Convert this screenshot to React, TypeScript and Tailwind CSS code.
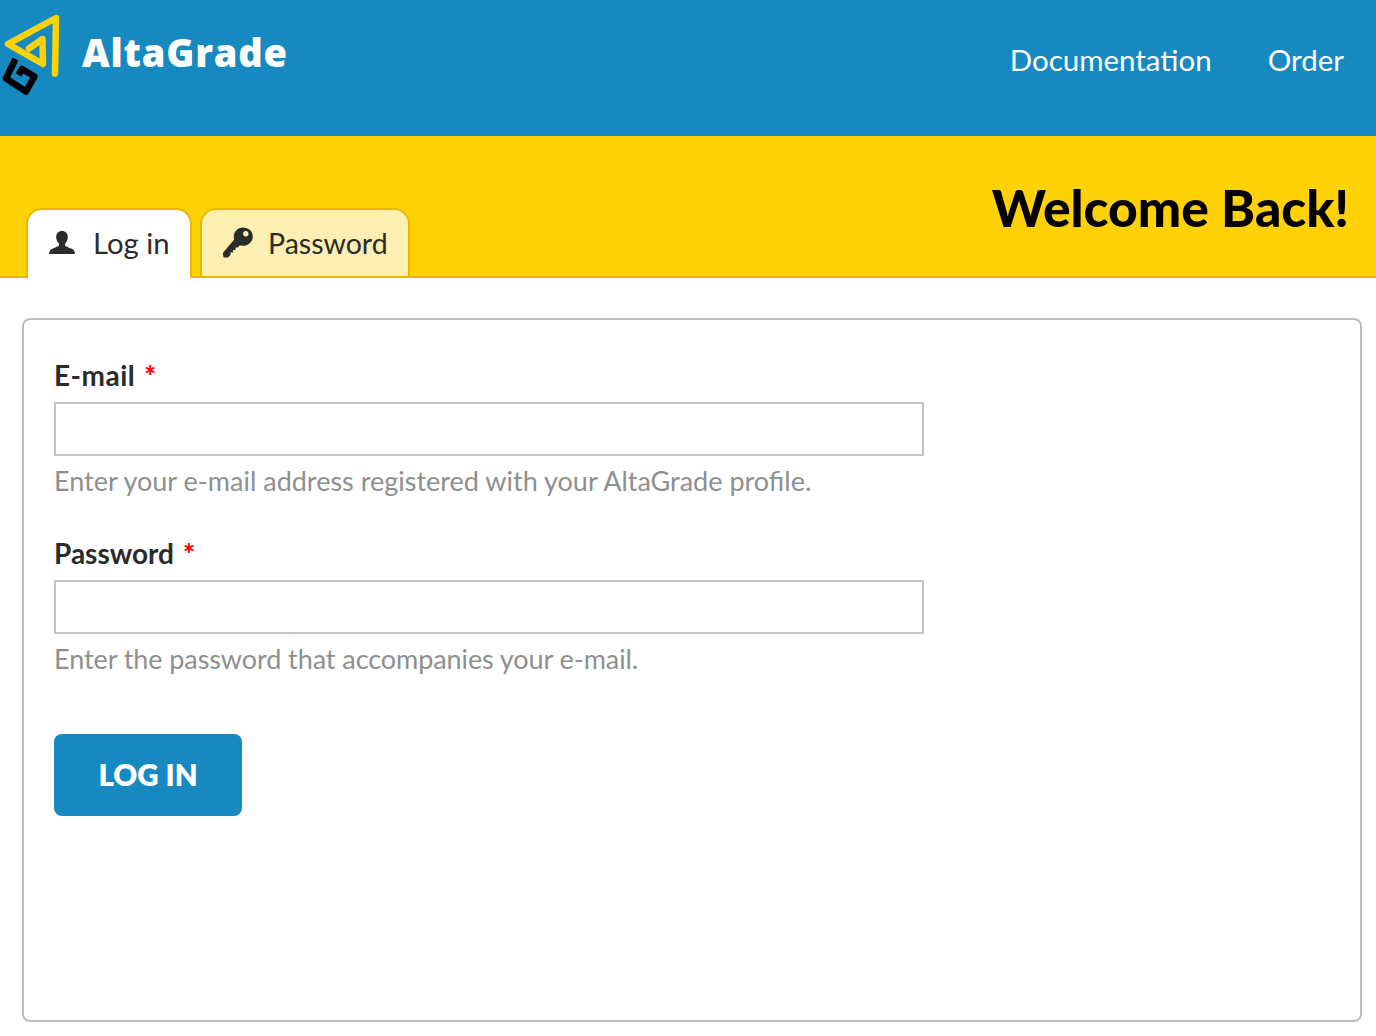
import React from "react";

const font = { fontFamily: '"Lato", "Open Sans", sans-serif' };

function Logo() {
  return (
    <svg width="62" height="98" viewBox="0 0 62 98" className="shrink-0" aria-hidden="true">
      <path d="M54 68.500 L55 13 L7 39 L42 59 L41.500 34 L28 43.500" fill="none" stroke="#ffd107" strokeWidth="6.500" strokeLinejoin="round" strokeLinecap="round" />
      <path d="M14.500 54 L5 73.500 L25 86.500 L33.500 71.500 L21 64 L17.500 70" fill="none" stroke="#000" strokeWidth="6.500" strokeLinejoin="round" />
    </svg>
  );
}

function UserIcon() {
  return (
    <svg width="28" height="26" viewBox="0 0 28 26" aria-hidden="true">
      <path fill="#2b2b2b" d="M14 0c3.800 0 5.800 2.600 5.800 6 0 2.800-1.100 5.200-2.700 6.600v1.600c0 1 3.400 2.200 6.200 3.300 2.100.8 3.400 2.300 3.700 5.500H1c.3-3.200 1.600-4.700 3.700-5.500 2.800-1.100 6.200-2.300 6.200-3.300v-1.600C9.300 11.200 8.200 8.800 8.200 6 8.200 2.600 10.200 0 14 0z" />
    </svg>
  );
}

function KeyIcon() {
  return (
    <svg width="32" height="32" viewBox="0 0 32 32" aria-hidden="true">
      <path fill="#2b2b2b" fillRule="evenodd" d="M21 0.500c5.500 0 9.800 3.800 9.800 9 0 5.500-5 9.800-10.500 9.300-1 0-1.800-.2-2.500-.5L15.800 20.500H13.500v2.500H11v2.500H8.500V28L6 30.500H1.500L0.800 26 12.200 12.500c-.3-.9-.4-1.800-.4-2.800C11.800 4.500 15.800 0.500 21 0.500zm2.800 3.500a2.700 2.700 0 1 0 0 5.400A2.700 2.700 0 0 0 23.800 4z" />
    </svg>
  );
}

function Field({ label, help, className, labelClass, helpClass }: { label: string; help: string; className?: string; labelClass?: string; helpClass?: string }) {
  return (
    <div className={className}>
      <label className="block text-[28px] leading-[34px] font-bold text-[#2b2b2b] -mt-[1px]">
        <span className={labelClass}>{label}</span>
        <span className="ml-[9px] text-[#f00] text-[28px] font-black leading-[0] align-[0px]">*</span>
      </label>
      <input className="mt-[10px] block w-[870px] h-[54px] border-2 border-[#c4c4c4] bg-white" />
      <p className={"mt-[8px] text-[27px] leading-[34px] text-[#8f8f8f] " + (helpClass ?? "")}>{help}</p>
    </div>
  );
}

export default function App() {
  return (
    <div className="w-[1376px] h-[1036px] overflow-hidden bg-white" style={font}>
      <header className="h-[136px] bg-[#1689c1] flex items-start justify-between text-white">
        <div className="flex items-start pl-[1px] pt-[5px]">
          <Logo />
          <span className="ml-[19px] -mt-0 pt-[23px] text-[38px] leading-[48px] font-extrabold tracking-[0.800px]" style={{ fontFamily: '"Open Sans", sans-serif' }}>
            AltaGrade
          </span>
        </div>
        <nav className="flex pt-[42px] pr-[32px] gap-[56px] text-[29.500px] leading-[36px]">
          <a>Documentation</a>
          <a>Order</a>
        </nav>
      </header>

      <div className="h-[142px] bg-[#ffd107] border-b-2 border-[#e6b800] flex items-end justify-between pl-[26px] pr-[27px]">
        <div className="flex gap-[8px] -mb-[2px]">
          <div className="w-[166px] h-[70px] bg-white border-2 border-b-0 border-[#e6b800] rounded-t-[16px] flex items-center pl-[20px] text-[29.300px] text-[#2b2b2b]">
            <UserIcon />
            <span className="ml-[17px] -mt-[2px]">Log in</span>
          </div>
          <div className="w-[210px] h-[70px] mb-0 bg-[#fdeeb2] border-2 border-[#e6b800] rounded-t-[16px] flex items-center pl-[20px] text-[28.500px] text-[#2b2b2b]">
            <KeyIcon />
            <span className="ml-[14px]">Password</span>
          </div>
        </div>
        <h1 className="self-start mt-[38px] text-[51.500px] leading-[66px] font-black text-black">Welcome Back!</h1>
      </div>

      <main className="mt-[40px] ml-[22px] w-[1340px] h-[704px] border-2 border-[#bdbdbd] rounded-[8px] pt-[39px] pl-[30px]">
        <Field label="E-mail" labelClass="tracking-[0.500px]" help="Enter your e-mail address registered with your AltaGrade profile." />
        <Field className="mt-[39px]" label="Password" help="Enter the password that accompanies your e-mail." helpClass="tracking-[-0.080px]" />
        <button className="mt-[58px] block w-[188px] h-[82px] rounded-[8px] bg-[#1689c1] text-white text-[29.500px] font-extrabold">
          LOG IN
        </button>
      </main>
    </div>
  );
}
